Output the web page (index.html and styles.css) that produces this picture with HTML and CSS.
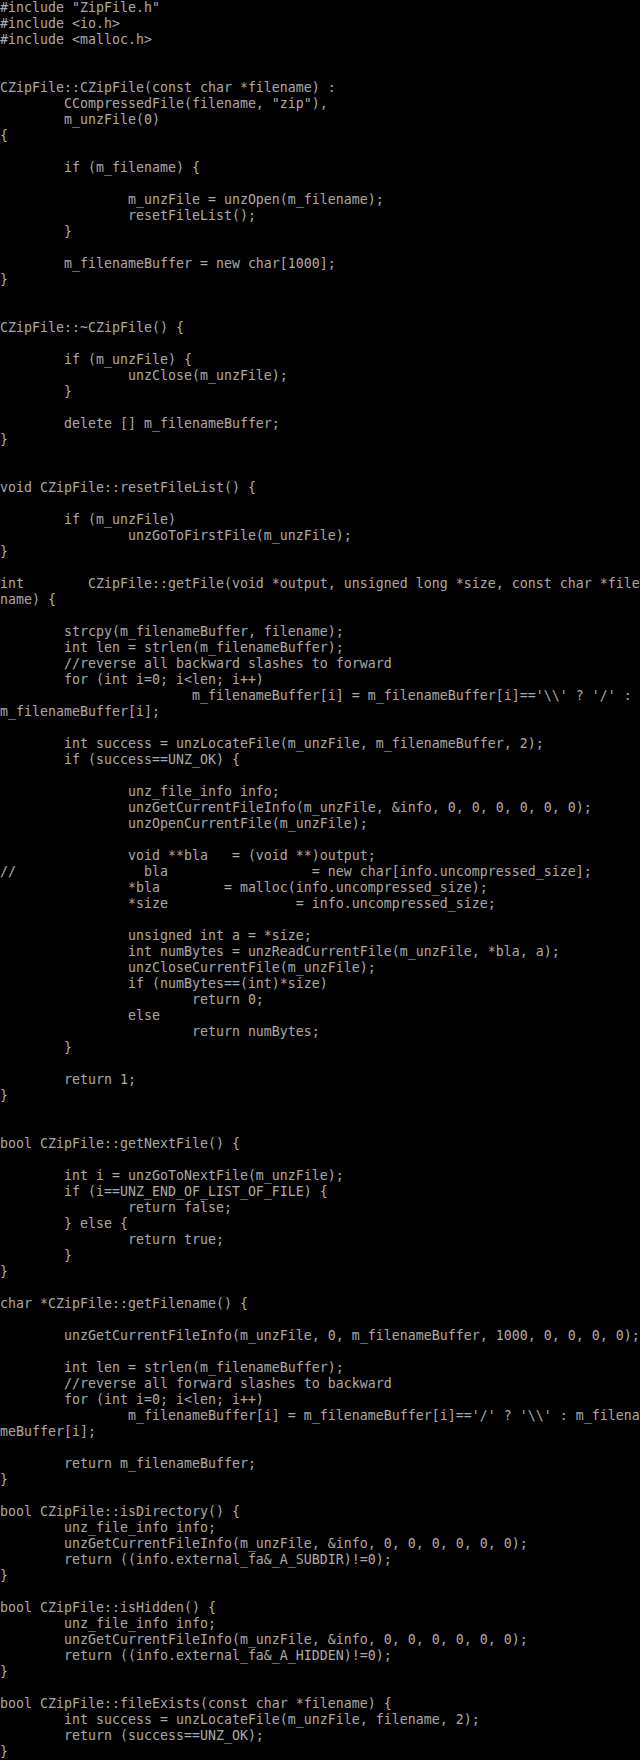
FILE: index.html
```html
<!DOCTYPE html>
<html lang="en">
<head>
<meta charset="utf-8">
<title>ZipFile.cpp</title>
<link rel="stylesheet" href="styles.css">
</head>
<body>
<pre class="console">#include "ZipFile.h"
#include &lt;io.h&gt;
#include &lt;malloc.h&gt;


CZipFile::CZipFile(const char *filename) :
        CCompressedFile(filename, "zip"),
        m_unzFile(0)
{

        if (m_filename) {

                m_unzFile = unzOpen(m_filename);
                resetFileList();
        }

        m_filenameBuffer = new char[1000];
}


CZipFile::~CZipFile() {

        if (m_unzFile) {
                unzClose(m_unzFile);
        }

        delete [] m_filenameBuffer;
}


void CZipFile::resetFileList() {

        if (m_unzFile)
                unzGoToFirstFile(m_unzFile);
}

int        CZipFile::getFile(void *output, unsigned long *size, const char *file
name) {

        strcpy(m_filenameBuffer, filename);
        int len = strlen(m_filenameBuffer);
        //reverse all backward slashes to forward
        for (int i=0; i&lt;len; i++)
                        m_filenameBuffer[i] = m_filenameBuffer[i]=='\\' ? '/' :
m_filenameBuffer[i];

        int success = unzLocateFile(m_unzFile, m_filenameBuffer, 2);
        if (success==UNZ_OK) {

                unz_file_info info;
                unzGetCurrentFileInfo(m_unzFile, &amp;info, 0, 0, 0, 0, 0, 0);
                unzOpenCurrentFile(m_unzFile);

                void **bla   = (void **)output;
//                bla                  = new char[info.uncompressed_size];
                *bla        = malloc(info.uncompressed_size);
                *size                = info.uncompressed_size;

                unsigned int a = *size;
                int numBytes = unzReadCurrentFile(m_unzFile, *bla, a);
                unzCloseCurrentFile(m_unzFile);
                if (numBytes==(int)*size)
                        return 0;
                else
                        return numBytes;
        }

        return 1;
}


bool CZipFile::getNextFile() {

        int i = unzGoToNextFile(m_unzFile);
        if (i==UNZ_END_OF_LIST_OF_FILE) {
                return false;
        } else {
                return true;
        }
}

char *CZipFile::getFilename() {

        unzGetCurrentFileInfo(m_unzFile, 0, m_filenameBuffer, 1000, 0, 0, 0, 0);

        int len = strlen(m_filenameBuffer);
        //reverse all forward slashes to backward
        for (int i=0; i&lt;len; i++)
                m_filenameBuffer[i] = m_filenameBuffer[i]=='/' ? '\\' : m_filena
meBuffer[i];

        return m_filenameBuffer;
}

bool CZipFile::isDirectory() {
        unz_file_info info;
        unzGetCurrentFileInfo(m_unzFile, &amp;info, 0, 0, 0, 0, 0, 0);
        return ((info.external_fa&amp;_A_SUBDIR)!=0);
}

bool CZipFile::isHidden() {
        unz_file_info info;
        unzGetCurrentFileInfo(m_unzFile, &amp;info, 0, 0, 0, 0, 0, 0);
        return ((info.external_fa&amp;_A_HIDDEN)!=0);
}

bool CZipFile::fileExists(const char *filename) {
        int success = unzLocateFile(m_unzFile, filename, 2);
        return (success==UNZ_OK);
}</pre>
</body>
</html>
```
FILE: styles.css
```css
html, body {
  margin: 0;
  padding: 0;
  background: #000000;
}

body {
  width: 640px;
  min-height: 1760px;
  overflow: hidden;
}

.console {
  margin: 0;
  padding: 0;
  width: 640px;
  color: #aaaaaa;
  font-family: "DejaVu Sans Mono", "Liberation Mono", monospace;
  font-size: 13.29px;
  line-height: 16px;
  white-space: pre;
}
```
